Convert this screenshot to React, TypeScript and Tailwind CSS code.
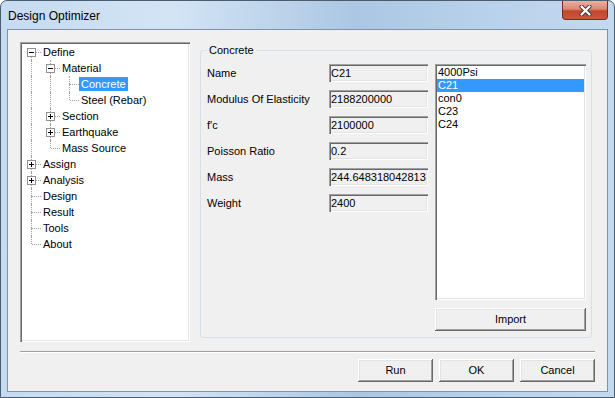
import React from 'react'

type TreeRow = {
  label: string
  guides: boolean[]
  pos: 'first' | 'mid' | 'last'
  box?: 'plus' | 'minus'
  selected?: boolean
}

const treeRows: TreeRow[] = [
  { label: 'Define', guides: [], pos: 'first', box: 'minus' },
  { label: 'Material', guides: [true], pos: 'mid', box: 'minus' },
  { label: 'Concrete', guides: [true, true], pos: 'mid', selected: true },
  { label: 'Steel (Rebar)', guides: [true, true], pos: 'last' },
  { label: 'Section', guides: [true], pos: 'mid', box: 'plus' },
  { label: 'Earthquake', guides: [true], pos: 'mid', box: 'plus' },
  { label: 'Mass Source', guides: [true], pos: 'last' },
  { label: 'Assign', guides: [], pos: 'mid', box: 'plus' },
  { label: 'Analysis', guides: [], pos: 'mid', box: 'plus' },
  { label: 'Design', guides: [], pos: 'mid' },
  { label: 'Result', guides: [], pos: 'mid' },
  { label: 'Tools', guides: [], pos: 'mid' },
  { label: 'About', guides: [], pos: 'last' },
]

const fields = [
  { name: 'Name', value: 'C21' },
  { name: 'Modulus Of Elasticity', value: '2188200000' },
  { name: "f'c", value: '2100000' },
  { name: 'Poisson Ratio', value: '0.2' },
  { name: 'Mass', value: '244.648318042813' },
  { name: 'Weight', value: '2400' },
]

const materials = ['4000Psi', 'C21', 'con0', 'C23', 'C24']

const sunken =
  'shadow-[inset_1px_1px_0_#a0a0a0,inset_2px_2px_0_#696969,inset_-1px_-1px_0_#ffffff,inset_-2px_-2px_0_#e3e3e3]'
const raised =
  'shadow-[inset_-1px_-1px_0_#696969,inset_1px_1px_0_#ffffff,inset_-2px_-2px_0_#a0a0a0,inset_2px_2px_0_#e3e3e3]'

function Guide({ on }: { on: boolean }) {
  return (
    <div className="relative w-[19px] h-[16px] shrink-0">
      {on && <div className="absolute left-[9px] top-0 h-[16px] border-l border-dotted border-[#a0a0a0]" />}
    </div>
  )
}

function Connector({ pos, box }: { pos: TreeRow['pos']; box?: TreeRow['box'] }) {
  return (
    <div className="relative w-[19px] h-[16px] shrink-0">
      {pos !== 'first' && (
        <div className="absolute left-[9px] top-0 h-[8px] border-l border-dotted border-[#a0a0a0]" />
      )}
      {pos !== 'last' && (
        <div className="absolute left-[9px] top-[8px] h-[8px] border-l border-dotted border-[#a0a0a0]" />
      )}
      <div className="absolute left-[10px] top-[8px] w-[9px] border-t border-dotted border-[#a0a0a0]" />
      {box && (
        <div className="absolute left-[5px] top-[4px] w-[9px] h-[9px] border border-[#919191] bg-white">
          <div className="absolute left-[1px] top-[3px] w-[5px] h-px bg-black" />
          {box === 'plus' && <div className="absolute left-[3px] top-[1px] w-px h-[5px] bg-black" />}
        </div>
      )}
    </div>
  )
}

function Button({ label, className }: { label: string; className: string }) {
  return (
    <button className={`${className} h-[23px] bg-[#f0f0f0] text-black flex items-center justify-center ${raised}`}>
      {label}
    </button>
  )
}

export default function App() {
  return (
    <div className="w-[615px] h-[398px] bg-white font-['Liberation_Sans',Arial,sans-serif] text-[11px] leading-[13px] text-black">
      <div className="w-[615px] h-[398px] rounded-t-[7px] border border-[#4d5d70] flex flex-col overflow-hidden bg-[linear-gradient(90deg,#c5dbf0_0%,#d3e4f5_28%,#abc7e3_58%,#b9d2eb_80%,#c3d9ef_100%)]">
        {/* Title bar */}
        <div className="h-[28px] flex items-start justify-between shrink-0">
          <span className="ml-[7px] mt-[8px] text-[12px] leading-[14px]">Design Optimizer</span>
          <div className="mr-[6px] w-[46px] h-[19px] rounded-b-[4px] border border-t-0 border-[#7a2a1e] bg-[linear-gradient(180deg,#eab0a3_0%,#dc8672_45%,#c4452e_55%,#c9573f_100%)] flex items-center justify-center">
            <svg width="13" height="11" viewBox="0 0 13 11">
              <path d="M2.5 1.5 L10.5 9.5 M10.5 1.5 L2.5 9.5" stroke="#3b3b3b" strokeWidth="4" strokeLinecap="round" />
              <path d="M2.5 1.5 L10.5 9.5 M10.5 1.5 L2.5 9.5" stroke="#ffffff" strokeWidth="2.2" strokeLinecap="round" />
            </svg>
          </div>
        </div>

        {/* Client area */}
        <div className="mx-[6px] mb-[5px] flex-1 border border-[#7f92a8] bg-[#f0f0f0] flex flex-col">
          <div className="pt-[12px] pl-[12px] flex items-start">
            {/* Tree */}
            <div className={`w-[170px] h-[300px] bg-white p-[2px] ${sunken}`}>
              {treeRows.map((row) => (
                <div key={row.label} className="flex h-[16px] items-center">
                  {row.guides.map((g, i) => (
                    <Guide key={i} on={g} />
                  ))}
                  <Connector pos={row.pos} box={row.box} />
                  <span
                    className={`px-[2px] h-[14px] leading-[14px] whitespace-nowrap ${
                      row.selected ? 'bg-[#3399ff] text-white' : ''
                    }`}
                  >
                    {row.label}
                  </span>
                </div>
              ))}
            </div>

            {/* Concrete group */}
            <div className="relative mt-[8px] ml-[10px] w-[392px] h-[288px] border border-[#d5dfe5] rounded-[3px]">
              <span className="absolute -top-[7px] left-[6px] px-[2px] bg-[#f0f0f0]">Concrete</span>
              <div className="flex pt-[13px] pl-[6px]">
                <div className="flex flex-col gap-[8px]">
                  {fields.map((f) => (
                    <div key={f.name} className="flex h-[18px] items-center">
                      <span className="w-[122px]">{f.name}</span>
                      <div className={`w-[99px] h-[18px] pl-[2px] flex items-center bg-[#f0f0f0] whitespace-nowrap overflow-hidden ${sunken}`}>
                        {f.value}
                      </div>
                    </div>
                  ))}
                </div>
                <div className="ml-[7px] flex flex-col">
                  <div className={`w-[151px] h-[236px] bg-white p-[2px] ${sunken}`}>
                    {materials.map((m) => (
                      <div
                        key={m}
                        className={`h-[13px] leading-[13px] pl-[1px] ${m === 'C21' ? 'bg-[#3399ff] text-white' : ''}`}
                      >
                        {m}
                      </div>
                    ))}
                  </div>
                  <Button label="Import" className="mt-[8px] w-[151px]" />
                </div>
              </div>
            </div>
          </div>

          {/* Separator */}
          <div className="ml-[12px] mt-[9px] w-[575px] h-[2px] border-t border-b border-t-[#a0a0a0] border-b-white" />

          {/* Dialog buttons */}
          <div className="ml-[12px] mt-[6px] w-[575px] flex justify-end gap-[6px]">
            <Button label="Run" className="w-[75px]" />
            <Button label="OK" className="w-[75px]" />
            <Button label="Cancel" className="w-[75px]" />
          </div>
        </div>
      </div>
    </div>
  )
}
